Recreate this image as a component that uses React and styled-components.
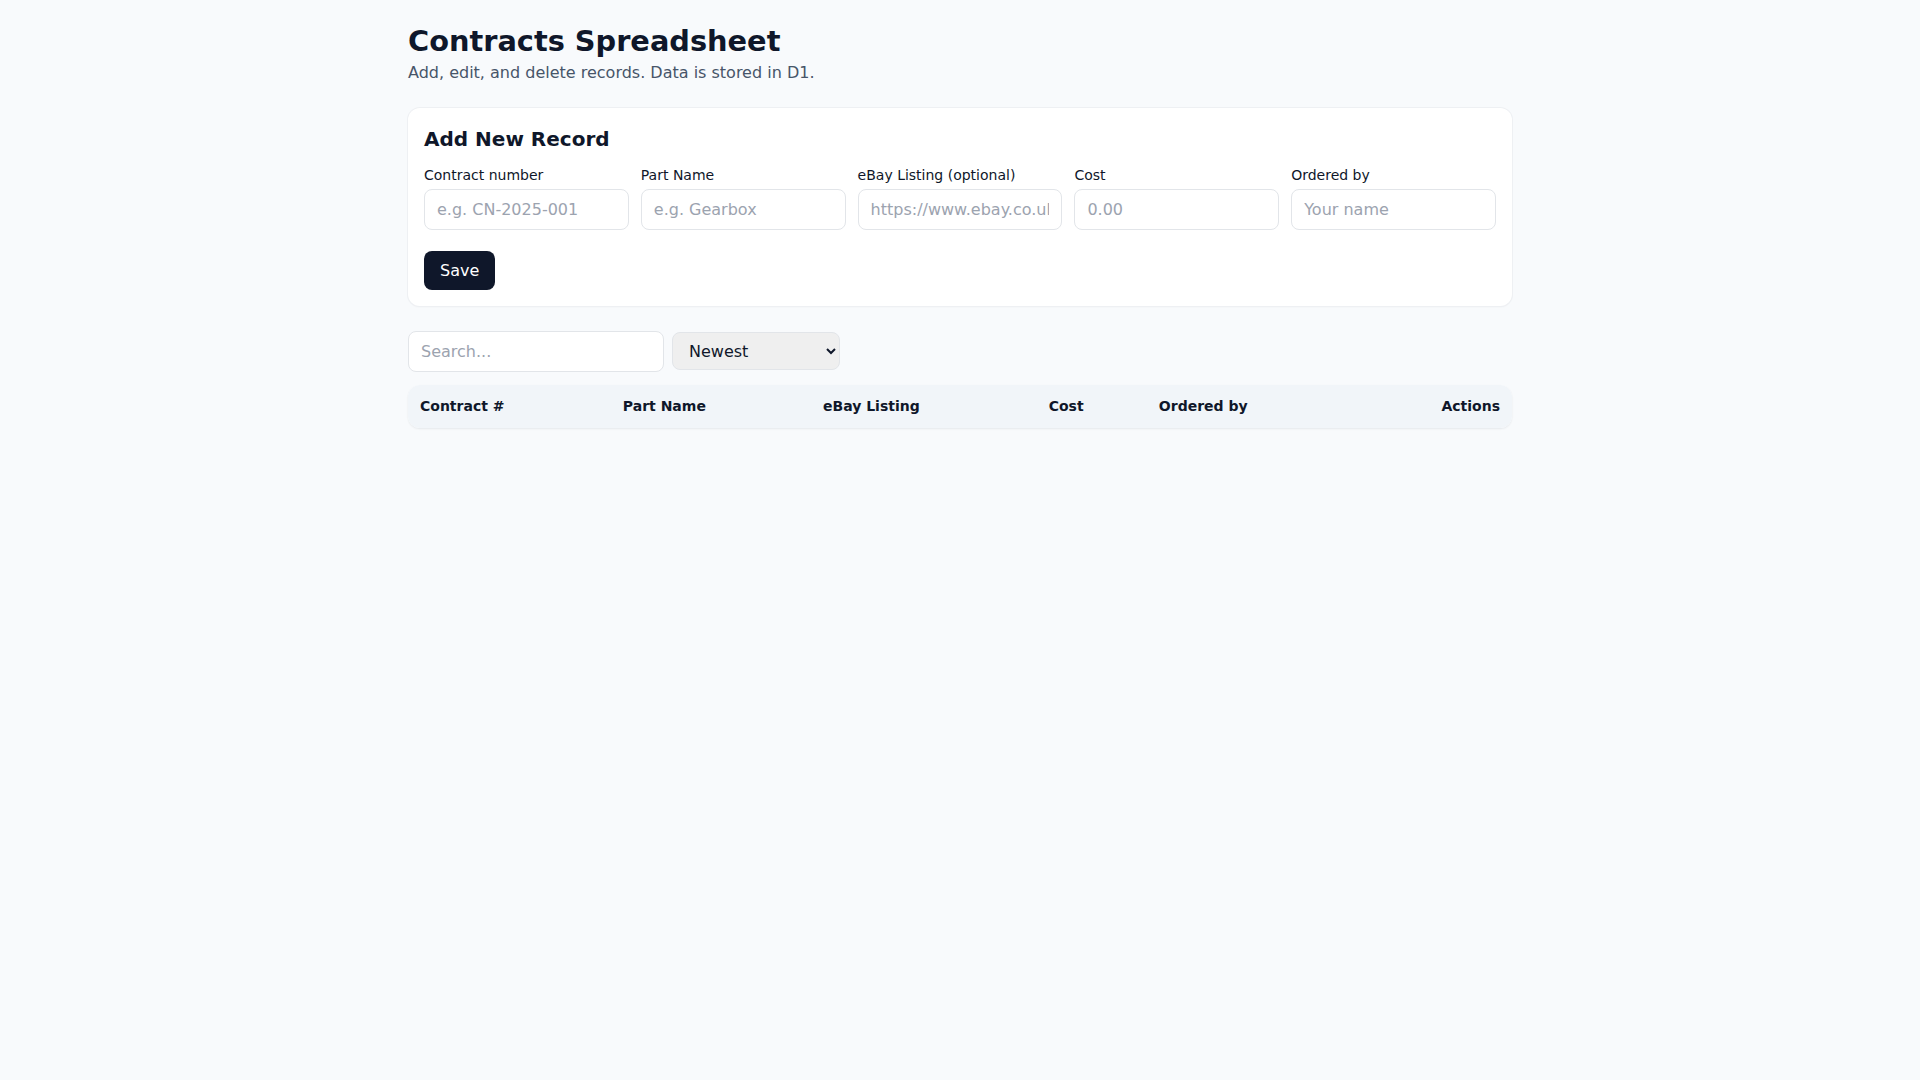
import React from "react";
import styled, { createGlobalStyle } from "styled-components";

const GlobalStyle = createGlobalStyle`
  html, body {
    margin: 0;
    padding: 0;
    background: #f8fafc;
    color: #0f172a;
    font-family: "DejaVu Sans", "Liberation Sans", sans-serif;
  }
  * {
    box-sizing: border-box;
  }
`;

const Page = styled.div`
  max-width: 1104px;
  margin: 0 auto;
  padding: 24px 0 40px;
`;

const Header = styled.header`
  margin-bottom: 26px;
`;

const Title = styled.h1`
  margin: 0 0 4px;
  font-size: 28.8px;
  font-weight: 700;
  line-height: 1.2;
  color: #0f172a;
`;

const Subtitle = styled.p`
  margin: 0;
  font-size: 16px;
  color: #475569;
`;

const Card = styled.section`
  background: #ffffff;
  border-radius: 12px;
  box-shadow: 0 0 0 1px #eef0f3, 0 1px 2px rgba(15, 23, 42, 0.06);
  padding: 16px;
  margin-bottom: 25px;
`;

const CardTitle = styled.h2`
  margin: 3px 0 16px;
  font-size: 20px;
  font-weight: 700;
  color: #0f172a;
`;

const FieldGrid = styled.div`
  display: grid;
  grid-template-columns: repeat(5, 1fr);
  gap: 12px;
  margin-bottom: 21px;
`;

const Field = styled.label`
  display: flex;
  flex-direction: column;
  gap: 6px;
  font-size: 14px;
  color: #0f172a;
  min-width: 0;
`;

const Input = styled.input`
  width: ${(p) => p.$width || "100%"};
  min-width: 0;
  padding: 10px 12px;
  font-family: inherit;
  font-size: 16px;
  color: #0f172a;
  background: #ffffff;
  border: 1px solid #e2e5e9;
  border-radius: 8px;
  outline: none;

  &::placeholder {
    color: #9ca3af;
  }
`;

const Button = styled.button`
  padding: 10px 16px;
  font-family: inherit;
  font-size: 16px;
  line-height: 1.2;
  color: #ffffff;
  background: #0f172a;
  border: 0;
  border-radius: 8px;
  cursor: pointer;
`;

const Toolbar = styled.div`
  display: flex;
  align-items: center;
  gap: 8px;
  margin-bottom: 13px;
`;

const Select = styled.select`
  width: 168px;
  height: 38px;
  padding: 0 10px 0 12px;
  font-family: inherit;
  font-size: 16px;
  color: #0f172a;
  background-color: #efefef;
  border: 1px solid #e2e5e9;
  border-radius: 8px;
`;

const TableWrap = styled.div`
  border-radius: 12px;
  overflow: hidden;
  box-shadow: 0 1px 2px rgba(15, 23, 42, 0.08);
  background: #ffffff;
`;

const Table = styled.table`
  width: 100%;
  border-collapse: collapse;
`;

const Th = styled.th`
  padding: 12px;
  font-size: 14px;
  line-height: 1.4;
  font-weight: 700;
  color: #0f172a;
  background: #f1f5f9;
  text-align: ${(p) => p.$align || "left"};
  white-space: nowrap;
`;

const fields = [
  { label: "Contract number", placeholder: "e.g. CN-2025-001" },
  { label: "Part Name", placeholder: "e.g. Gearbox" },
  { label: "eBay Listing (optional)", placeholder: "https://www.ebay.co.uk/..." },
  { label: "Cost", placeholder: "0.00" },
  { label: "Ordered by", placeholder: "Your name" },
];

const columns = ["Contract #", "Part Name", "eBay Listing", "Cost", "Ordered by"];

export default function App() {
  return (
    <>
      <GlobalStyle />
      <Page>
        <Header>
          <Title>Contracts Spreadsheet</Title>
          <Subtitle>Add, edit, and delete records. Data is stored in D1.</Subtitle>
        </Header>

        <Card>
          <CardTitle>Add New Record</CardTitle>
          <FieldGrid>
            {fields.map((f) => (
              <Field key={f.label}>
                {f.label}
                <Input placeholder={f.placeholder} />
              </Field>
            ))}
          </FieldGrid>
          <Button>Save</Button>
        </Card>

        <Toolbar>
          <Input $width="256px" placeholder="Search..." />
          <Select defaultValue="newest">
            <option value="newest">Newest</option>
            <option value="oldest">Oldest</option>
          </Select>
        </Toolbar>

        <TableWrap>
          <Table>
            <thead>
              <tr>
                {columns.map((c) => (
                  <Th key={c}>{c}</Th>
                ))}
                <Th $align="right">Actions</Th>
              </tr>
            </thead>
            <tbody />
          </Table>
        </TableWrap>
      </Page>
    </>
  );
}
